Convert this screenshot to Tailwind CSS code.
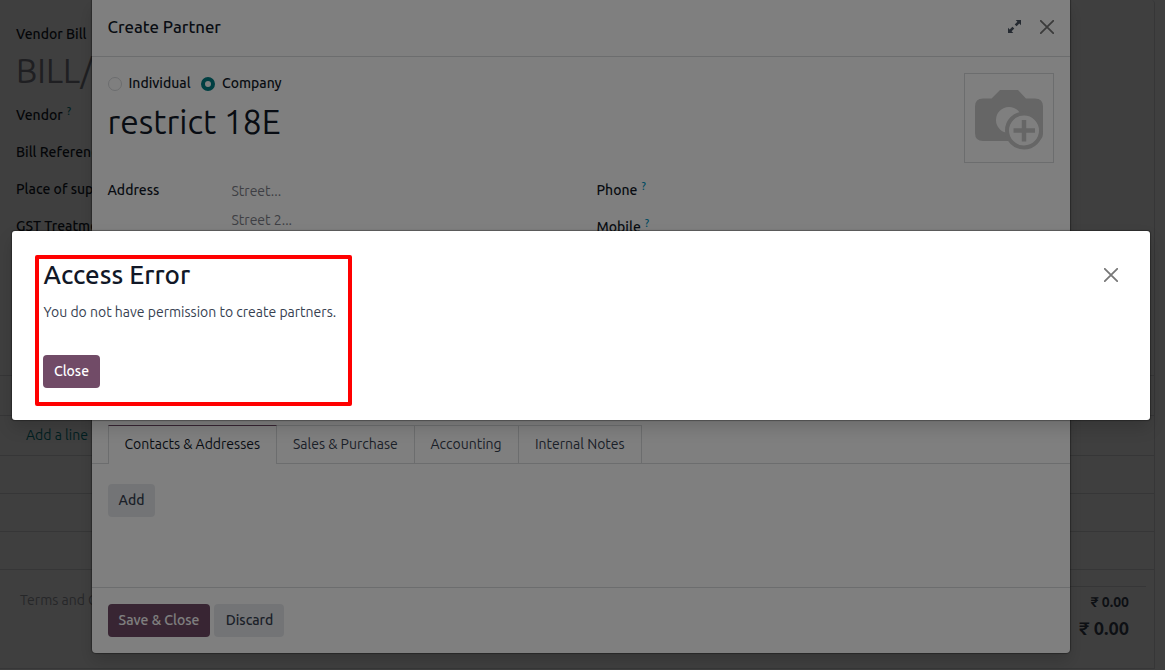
<!DOCTYPE html>
<html lang="en"><head><meta charset="utf-8"><title>Create Partner</title>
<script src="https://cdn.jsdelivr.net/npm/@tailwindcss/browser@4"></script></head>
<body class="h-[670px] overflow-hidden bg-white font-['Ubuntu','Noto_Sans',sans-serif] text-[14px] leading-[21px] text-[#111827]">
<div class="relative h-[670px] w-[1165px] overflow-hidden">
  <!-- Vendor bill form -->
  <main class="h-[669px] w-[1155px] rounded-tr-[4px] border-r border-b border-[#d8dadd] flex flex-col whitespace-nowrap">
    <section class="h-[375px] shrink-0 pl-4 pt-[24px] font-medium">
      <div class="h-[21px]">Vendor Bill</div>
      <div class="mt-[3px] h-[46px] text-[33.6px] leading-[46px] font-normal text-[#7c7f88]">BILL/</div>
      <div class="mt-[11px] h-[37px]">Vendor<sup class="ml-1 text-[10.5px] top-[-5px] text-[#017e84]">?</sup></div>
      <div class="h-[37px]">Bill Reference</div>
      <div class="h-[37px]">Place of supply</div>
      <div class="h-[37px]">GST Treatment</div>
    </section>
    <section class="shrink-0">
      <div class="h-[41px] border-y border-[#d8dadd]"></div>
      <div class="h-[40px] border-b border-[#d8dadd] pl-[26px] pt-[9px] text-[#017e84]">Add a line</div>
      <div class="h-[38px] border-b border-[#d8dadd]"></div>
      <div class="h-[38px] border-b border-[#d8dadd]"></div>
      <div class="h-[38px] border-b border-[#d8dadd]"></div>
    </section>
    <section class="flex justify-between pt-4 pr-2">
      <p class="pl-5 pt-[4px] text-[#9a9ca5]">Terms and Conditions</p>
      <div class="w-[300px] border-t border-[#d8dadd] pt-[5px] pr-[17px] text-right font-bold text-[#374151]">
        <div>₹ 0.00</div>
        <div class="mt-[2px] text-[18.2px] leading-[27px]">₹ 0.00</div>
      </div>
    </section>
  </main>

  <div class="absolute inset-0 bg-black/50"></div>
  <!-- Partner dialog -->
  <section class="absolute left-[92px] top-0 h-[653px] w-[978px] rounded-b-[4px] bg-white shadow-[0_8px_16px_rgba(0,0,0,0.15),0_0_1px_1px_rgba(0,0,0,0.3)] flex flex-col">
    <header class="flex h-[57px] shrink-0 items-center justify-between border-b border-[#d8dadd] pl-[15.5px] pr-4 pb-[2px]">
      <h4 class="pb-[2px] text-[16.8px] font-medium">Create Partner</h4>
      <div class="flex items-center gap-[19px]">
        <svg class="mb-px size-[13px] text-[#4b5563]" viewBox="0 0 13 13" fill="currentColor"><path d="M7.700 0H13V5.300L11.300 3.600L8.600 6.300L6.700 4.400L9.400 1.700ZM5.300 13H0V7.700L1.700 9.400L4.400 6.700L6.300 8.600L3.600 11.300Z"/></svg>
        <svg class="size-[14px] text-[#777]" viewBox="0 0 14 14" stroke="currentColor" stroke-width="1.8" stroke-linecap="round"><path d="M.8.8l12.400 12.400M13.200.8L.8 13.200"/></svg>
      </div>
    </header>
    <div class="flex h-[368px] shrink-0 flex-col pl-[15.5px] pr-4 pt-4">
      <div class="flex h-[105px] justify-between">
        <div>
          <div class="flex h-[21px] items-center font-medium">
            <i class="mt-[1px] size-[14px] rounded-full border border-[#d8dadd]"></i><span class="ml-[7px] w-[72.500px]">Individual</span>
            <i class="mt-[1px] size-[14px] rounded-full border-4 border-[#017e84]"></i><span class="ml-[7px]">Company</span>
          </div>
          <div class="mt-[5px] text-[33.6px] leading-[46px]">restrict 18E</div>
        </div>
        <div class="flex size-[90px] items-center justify-center border border-[#d8dadd]">
          <svg class="mt-[3px] h-[61px] w-[70px]" viewBox="0 0 70 61"><path d="M9 9.500H17.500L26 1H44L52 9.500H61Q69 9.500 69 17.500V44Q69 52 61 52H9Q1 52 1 44V17.500Q1 9.500 9 9.500Z" fill="#ccc"/><circle cx="35" cy="31" r="13" fill="#fff"/><circle cx="50" cy="41.500" r="17" fill="#fff" stroke="#ccc" stroke-width="4"/><path d="M39.500 41.500h21.500M50 31v21.500" stroke="#ccc" stroke-width="4.500"/></svg>
        </div>
      </div>
      <div class="flex pt-[2px]">
        <div class="flex w-[489px]">
          <div class="w-[124px] font-medium">Address</div>
          <div class="pt-px text-[#7c7f88]"><div class="h-[29px]">Street...</div><div>Street 2...</div></div>
        </div>
        <div class="font-medium">
          <div class="h-[37px]">Phone<sup class="ml-1 top-[-5px] text-[10.5px] text-[#0096c4]">?</sup></div>
          <div class="h-[37px]">Mobile<sup class="ml-1 top-[-5px] text-[10.5px] text-[#0096c4]">?</sup></div>
        </div>
      </div>
    </div>
    <nav class="flex h-[39px] shrink-0 text-[#374151]">
      <div class="w-4 border-b border-[#d8dadd]"></div>
      <div class="w-[169px] border-x border-t border-x-[#d8dadd] border-t-[#714b67] pl-[15.500px] pt-[8px] text-[#111827]">Contacts &amp; Addresses</div>
      <div class="w-[138px] border-y border-r border-[#d8dadd] pl-4 pt-[8px]">Sales &amp; Purchase</div>
      <div class="w-[104px] border-y border-r border-[#d8dadd] pl-[15.500px] pt-[8px]">Accounting</div>
      <div class="w-[123px] border-y border-r border-[#d8dadd] pl-4 pt-[8px]">Internal Notes</div>
      <div class="grow border-b border-[#d8dadd]"></div>
    </nav>
    <div class="h-[123px] shrink-0 px-4 pt-5 font-medium text-[#374151]"><button class="h-[33px] w-[47px] rounded-[4px] bg-[#e7e9ed]">Add</button></div>
    <footer class="flex gap-1 border-t border-[#d8dadd] px-4 pt-4 font-medium">
      <button class="h-[33px] w-[102px] rounded-[4px] bg-[#714b67] text-white">Save &amp; Close</button>
      <button class="h-[33px] w-[70px] rounded-[4px] bg-[#e7e9ed] pl-px text-[#374151]">Discard</button>
    </footer>
  </section>

  <div class="absolute inset-0 bg-black/50"></div>
  <!-- Error dialog -->
  <section class="absolute left-[12px] top-[231px] h-[189px] w-[1138px] rounded-[3px] bg-white shadow-[0_8px_16px_rgba(0,0,0,0.15),0_0_1px_1px_rgba(0,0,0,0.3)] flex justify-between pl-[31px] pr-8 pt-[28px]">
    <div>
      <h2 class="pl-[0.5px] text-[26px] leading-[32px] font-medium">Access Error</h2>
      <p class="mt-[11px] pl-[0.5px] text-[#374151]">You do not have permission to create partners.</p>
      <button class="mt-[32px] h-[33px] w-[57px] rounded-[4px] bg-[#714b67] font-medium text-white">Close</button>
    </div>
    <svg class="mt-[9px] size-[14px] text-[#777]" viewBox="0 0 14 14" stroke="currentColor" stroke-width="1.8" stroke-linecap="round"><path d="M.8.8l12.400 12.400M13.200.8L.8 13.200"/></svg>
  </section>
  <!-- Highlight frame -->
  <div class="absolute left-[35px] top-[255px] h-[151px] w-[317px] rounded-[2px] border-4 border-[#f00]"></div>
</div>
</body></html>
